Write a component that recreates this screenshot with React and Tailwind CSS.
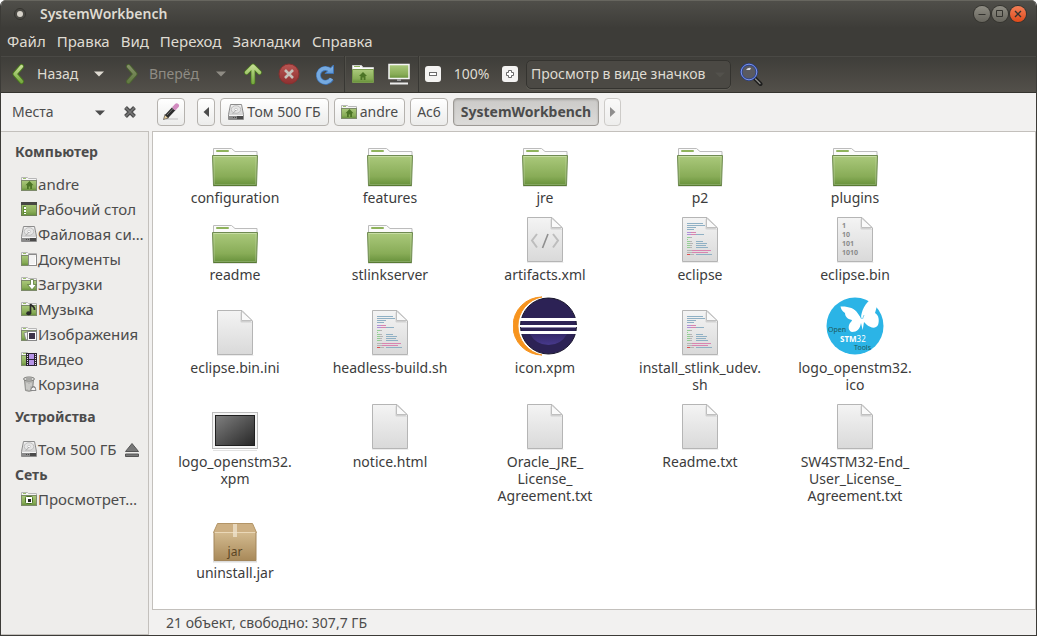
import { useState } from "react";

const menuItems = ["Файл", "Правка", "Вид", "Переход", "Закладки", "Справка"];

const places = [
  {
    title: "Компьютер",
    tall: true,
    items: [
      { name: "andre", icon: "home" },
      { name: "Рабочий стол", icon: "desktop" },
      { name: "Файловая си…", icon: "drive" },
      { name: "Документы", icon: "documents" },
      { name: "Загрузки", icon: "downloads" },
      { name: "Музыка", icon: "music" },
      { name: "Изображения", icon: "pictures" },
      { name: "Видео", icon: "video" },
      { name: "Корзина", icon: "trash" },
    ],
  },
  {
    title: "Устройства",
    tall: true,
    items: [{ name: "Том 500 ГБ", icon: "drive", eject: true }],
  },
  {
    title: "Сеть",
    tall: false,
    items: [{ name: "Просмотрет…", icon: "network" }],
  },
];

const files = [
  { name: "configuration", type: "folder" },
  { name: "features", type: "folder" },
  { name: "jre", type: "folder" },
  { name: "p2", type: "folder" },
  { name: "plugins", type: "folder" },
  { name: "readme", type: "folder" },
  { name: "stlinkserver", type: "folder" },
  { name: "artifacts.xml", type: "xml" },
  { name: "eclipse", type: "script" },
  { name: "eclipse.bin", type: "binary" },
  { name: "eclipse.bin.ini", type: "file" },
  { name: "headless-build.sh", type: "script" },
  { name: "icon.xpm", type: "eclipse" },
  { name: "install_stlink_udev.\nsh", type: "script" },
  { name: "logo_openstm32.\nico", type: "stm32" },
  { name: "logo_openstm32.\nxpm", type: "image" },
  { name: "notice.html", type: "file" },
  { name: "Oracle_JRE_\nLicense_\nAgreement.txt", type: "file" },
  { name: "Readme.txt", type: "file" },
  { name: "SW4STM32-End_\nUser_License_\nAgreement.txt", type: "file" },
  { name: "uninstall.jar", type: "jar" },
];

// Gradients shared by all icons
function IconDefs() {
  return (
    <svg className="absolute size-0" aria-hidden="true">
      <defs>
        <linearGradient id="green" x1="0" y1="0" x2="0" y2="1">
          <stop offset="0" stopColor="#abc97c" />
          <stop offset="0.7" stopColor="#88ac57" />
          <stop offset="1" stopColor="#66903a" />
        </linearGradient>
        <linearGradient id="arrow" x1="0" y1="0" x2="0" y2="1">
          <stop offset="0" stopColor="#c3dc91" />
          <stop offset="1" stopColor="#79ab42" />
        </linearGradient>
        <linearGradient id="paper" x1="0" y1="0" x2="0" y2="1">
          <stop offset="0" stopColor="#f4f4f4" />
          <stop offset="1" stopColor="#d9d9d9" />
        </linearGradient>
        <linearGradient id="metal" x1="0" y1="0" x2="0" y2="1">
          <stop offset="0" stopColor="#f2f2f2" />
          <stop offset="1" stopColor="#c4c4c4" />
        </linearGradient>
        <linearGradient id="screen" x1="0" y1="0" x2="1" y2="1">
          <stop offset="0" stopColor="#808080" />
          <stop offset="1" stopColor="#262626" />
        </linearGradient>
        <linearGradient id="box" x1="0" y1="0" x2="0" y2="1">
          <stop offset="0" stopColor="#d3ba8f" />
          <stop offset="1" stopColor="#a88959" />
        </linearGradient>
        <linearGradient id="moon" x1="0" y1="0" x2="0" y2="1">
          <stop offset="0" stopColor="#35296a" />
          <stop offset="1" stopColor="#47398c" />
        </linearGradient>
        <linearGradient id="red" x1="0" y1="0" x2="0" y2="1">
          <stop offset="0" stopColor="#b95653" />
          <stop offset="1" stopColor="#8f3030" />
        </linearGradient>
        <linearGradient id="blue" x1="0" y1="0" x2="0" y2="1">
          <stop offset="0" stopColor="#8fbdec" />
          <stop offset="1" stopColor="#5d96d4" />
        </linearGradient>
      </defs>
    </svg>
  );
}

function Caret({ className = "" }) {
  return (
    <svg viewBox="0 0 10 6" className={`h-1.5 w-2.5 ${className}`} aria-hidden="true">
      <path d="M0 0.5h10L5 5.5z" fill="currentColor" />
    </svg>
  );
}

function SmallFolder({ children }) {
  return (
    <>
      <path d="M.5 12V1.5h6l1 1h8V12z" fill="#f4f4f4" stroke="#b7b7b7" />
      <rect x="2" y="2" width="3" height="1" fill="#9cbf6c" />
      <rect x=".5" y="4.500" width="15" height="10" fill="url(#green)" stroke="#7d8a6b" />
      {children}
    </>
  );
}

function PlaceIcon({ type }) {
  return (
    <svg viewBox="0 0 16 16" className="size-4 shrink-0" aria-hidden="true">
      {type === "home" && (
        <SmallFolder>
          <path d="M8.500 5 4.500 9.200H6V13h1.800v-2.500h1.400V13H11V9.200h1.500z" fill="#4c7426" />
        </SmallFolder>
      )}
      {type === "desktop" && (
        <>
          <rect x=".5" y="1.500" width="15" height="13" fill="url(#green)" stroke="#6c7f56" />
          <rect x="0" y="1" width="16" height="3" fill="#474743" />
          <rect x="2" y="5" width="3" height="8" fill="#5f8a35" />
          <path d="M3 6h2v2H3zM3 9h2v2H3zM3 12h2v1H3z" fill="#fff" />
        </>
      )}
      {type === "drive" && (
        <>
          <path d="M2.500.5h11l2 10v5H.5v-5z" fill="url(#metal)" stroke="#8c8c8c" />
          <ellipse cx="8" cy="5.500" rx="4.800" ry="3.800" fill="#e6e6e6" stroke="#b4b4b4" strokeWidth=".8" />
          <ellipse cx="8" cy="5.500" rx="1.500" ry="1.200" fill="#fafafa" stroke="#b4b4b4" strokeWidth=".6" />
          <path d="M4.500 10 8 6" stroke="#a3a3a3" strokeWidth=".8" />
          <rect x="1" y="11" width="14" height="1" fill="#f5f5f5" />
          <rect x="1" y="12" width="14" height="3" fill="#8a8a8a" />
          <path d="M5 13h1v1H5zM7 13h1v1H7zM9 12h6v3H9z" fill="#4a4a4a" />
        </>
      )}
      {type === "documents" && (
        <SmallFolder>
          <path d="M7.500 3.500h8v11h-8z" fill="#f3f3f3" stroke="#8b8b8b" />
          <path d="M9 13.500h5.500V6" stroke="#fff" fill="none" />
        </SmallFolder>
      )}
      {type === "downloads" && (
        <SmallFolder>
          <path d="M9.500 3.500h3v5h3L11 13.800 6.500 8.500h3z" fill="#fff" stroke="#5b7a3a" strokeWidth=".8" />
        </SmallFolder>
      )}
      {type === "music" && (
        <SmallFolder>
          <path d="M9.500 12V3c.3 2 4.500 2 4 6" stroke="#2b2b2b" strokeWidth="1.700" fill="none" />
          <ellipse cx="7.700" cy="12.300" rx="2.500" ry="2" fill="#2b2b2b" />
        </SmallFolder>
      )}
      {type === "pictures" && (
        <SmallFolder>
          <path d="m3 7 6-2 2 7-6 2z" fill="#eee" stroke="#777" strokeWidth=".7" />
          <rect x="6.500" y="5.500" width="9" height="9" fill="#fff" stroke="#888" />
          <rect x="8" y="7" width="6" height="6" fill="#3d3347" />
        </SmallFolder>
      )}
      {type === "video" && (
        <SmallFolder>
          <rect x="5" y="2" width="11" height="13" fill="#2c2433" />
          <path d="M8 3h5v5H8zM8 9h5v5H8z" fill="#b694e8" />
          <path d="M6.500 3v11M14.500 3v11" stroke="#e5e0ea" strokeDasharray="1 1" />
        </SmallFolder>
      )}
      {type === "trash" && (
        <>
          <path d="M3.500 4h9l-1 10.500q-3.500 1.500-7 0z" fill="#b9b9b6" stroke="#8e8e8b" />
          <ellipse cx="8" cy="3" rx="5.500" ry="2" fill="#dadad7" stroke="#7d7d7a" />
          <path d="M5 3h6" stroke="#747472" />
          <path d="M6 7v6M8 8v6M10 7v3" stroke="#d9d9d6" />
          <path d="m9.500 14.500 1.500-3.500h3l1 3.500zM11 12l1.500-2 1.500 2" fill="#f4f4f4" stroke="#808080" strokeWidth=".9" />
        </>
      )}
      {type === "network" && (
        <SmallFolder>
          <rect x="4.500" y="5.500" width="7" height="7" rx="1" fill="#fff" stroke="#4c7426" />
          <rect x="7" y="8" width="3" height="3" fill="#222" />
        </SmallFolder>
      )}
    </svg>
  );
}

function Sheet({ children }) {
  return (
    <>
      <path d="M6 45.500h36.500" stroke="#ececec" />
      <path d="M6.500.5H31L41.500 11v33.500h-35z" fill="url(#paper)" stroke="#b5b5b5" />
      <path d="M29.500 2v9.500q0 1 1 1H41z" fill="#000" opacity=".12" />
      <path d="M30.500 1v9q0 .5.500.5h10z" fill="#fafafa" stroke="#b5b5b5" strokeWidth=".8" />
      {children}
    </>
  );
}

// [x, y, width, colour] for each piece of code on a script sheet
const codeLines = [
  [11, 6, 16, "#8fb0c4"],
  [11, 8, 18, "#8fb0c4"],
  [11, 10, 9, "#8fb0c4"],
  [11, 12, 7, "#8fb0c4"],
  [11, 15, 4, "#b08fd8"],
  [15, 15, 5, "#d884b0"],
  [11, 17, 4, "#b08fd8"],
  [15, 17, 5, "#d884b0"],
  [20, 17, 8, "#8fb0c4"],
  [11, 20, 3, "#93cf93"],
  [14, 20, 2, "#b5b5b5"],
  [11, 22, 1, "#93cf93"],
  [11, 24, 3, "#93cf93"],
  [14, 24, 2, "#b5b5b5"],
  [20, 24, 7, "#8fb0c4"],
  [11, 26, 3, "#93cf93"],
  [14, 26, 3, "#b5b5b5"],
  [20, 26, 11, "#8fb0c4"],
  [11, 28, 3, "#93cf93"],
  [14, 28, 2, "#b5b5b5"],
  [20, 28, 10, "#8fb0c4"],
  [11, 30, 3, "#93cf93"],
  [14, 30, 2, "#b5b5b5"],
  [20, 30, 12, "#8fb0c4"],
  [11, 33, 5, "#b5b5b5"],
  [16, 33, 19, "#d884b0"],
  [11, 35, 5, "#b5b5b5"],
  [16, 35, 16, "#d884b0"],
  [11, 37, 3, "#dc5050"],
  [14, 37, 4, "#b5b5b5"],
  [20, 37, 16, "#8fb0c4"],
];

function FileIcon({ type }) {
  if (type === "eclipse") {
    return (
      <svg viewBox="0 0 64 64" className="size-16" aria-hidden="true">
        <path d="M29 3A29 29 0 0 0 29 61A29.500 29.500 0 0 1 29 3z" fill="#f7941e" stroke="#f7941e" />
        <circle cx="35.500" cy="32" r="29" fill="#fff" />
        <circle cx="35.500" cy="32" r="28" fill="#2c2255" stroke="#17142b" />
        <path d="M17 40h37Q48 51 35.500 51T17 40z" fill="url(#moon)" />
        <path d="M7 24h57v3H7zM7 31h57v2H7zM7 37h57v3H7z" fill="#fff" />
        <path d="M8 33.500h55" stroke="#8f88ad" />
      </svg>
    );
  }
  if (type === "stm32") {
    return (
      <svg viewBox="0 0 64 64" className="size-16" aria-hidden="true">
        <circle cx="32" cy="32" r="28.500" fill="#2bb4e6" />
        <path
          d="M17.500 12.500C24 12 32 14 34.500 19L38 24C38 18 42 8 50 4 55 3 56 7 54 12L52 19C56 21 56.500 27 55 31 52 36 47 33 44 31L41 28 39.700 36 38 29C37 35 34 38 29 38 25 37 25 32 27 29 29 27 29 26 29 26 24 25 22 22 22 19 19 17 18 15 17.500 12.500z"
          fill="#fff"
        />
        <path d="M38.500 25 37 21M39.500 25 41 21" stroke="#2bb4e6" strokeWidth=".6" />
        <text x="5" y="38" fontSize="7" fill="#1f5a5c" className="font-['Noto_Sans']">Open</text>
        <text x="17" y="48" fontSize="8" fill="#fff" className="font-['Noto_Sans']">
          <tspan fontWeight="700">STM</tspan>32
        </text>
        <text x="31" y="56" fontSize="7" fill="#1f5a5c" className="font-['Noto_Sans']">Tools</text>
      </svg>
    );
  }
  return (
    <svg viewBox="0 0 48 48" className="size-12" aria-hidden="true">
      {type === "folder" && (
        <>
          <path d="M2 46.500h44" stroke="#e3e3e3" />
          <path d="M2.500 16V8.500h18l3.500 3h22V16z" fill="#fbfbfb" stroke="#bcbcbc" />
          <rect x="5" y="10" width="13" height="2" rx="1" fill="#8fb35c" />
          <path d="M1.500 15.500h45l-1 30h-43z" fill="url(#green)" stroke="#6f8a52" />
          <path d="M2.500 16.500h43" stroke="#c6dca3" />
          <path d="m3 17 .5 27.500h41L45 17" fill="none" stroke="#fff" opacity=".18" />
          <path d="M2.500 45.500h43" stroke="#587a33" />
        </>
      )}
      {type === "file" && <Sheet />}
      {type === "xml" && (
        <Sheet>
          <path d="m16 17-5 6.500 5 7M32 17l5 6.500-5 7" fill="none" stroke="#bdbdbd" strokeWidth="2" />
          <path d="M27 17l-5.500 14" stroke="#8f8f8f" strokeWidth="1.600" />
        </Sheet>
      )}
      {type === "script" && (
        <Sheet>
          {codeLines.map(([x, y, width, color]) => (
            <rect key={`${x}-${y}`} x={x} y={y} width={width} height="1" fill={color} />
          ))}
        </Sheet>
      )}
      {type === "binary" && (
        <Sheet>
          <g fontSize="7" fontWeight="700" fill="#8a8a8a" className="font-['Noto_Sans']">
            <text x="11" y="11">1</text>
            <text x="11" y="20">10</text>
            <text x="11" y="29">101</text>
            <text x="11" y="38">1010</text>
          </g>
        </Sheet>
      )}
      {type === "image" && (
        <>
          <path d="M2 46.500h44" stroke="#e3e3e3" />
          <rect x="1.500" y="8.500" width="45" height="36" fill="#f4f4f4" stroke="#bdbdbd" />
          <rect x="4.500" y="11.500" width="39" height="30" fill="url(#screen)" stroke="#1f1f1f" />
        </>
      )}
      {type === "jar" && (
        <>
          <path d="M2 46.500h44" stroke="#dcdcdc" strokeWidth="2" />
          <path d="M6.500 8.500h35l4 9h-43z" fill="#cdb084" stroke="#b39567" />
          <path d="M3 17.500h42v28H3z" fill="url(#box)" stroke="#a2855a" />
          <path d="M3.500 17.500h41" stroke="#ead8b8" />
          <path d="M22 9h4v13h-4z" fill="#efe4cf" opacity=".75" />
          <text x="24" y="41" textAnchor="middle" fontSize="12" fill="#5b4624" className="font-['Noto_Sans']">jar</text>
        </>
      )}
    </svg>
  );
}

function ToolButton({ label, disabled, className = "w-9", children }) {
  return (
    <button
      type="button"
      aria-label={label}
      disabled={disabled}
      className={`flex h-full shrink-0 items-center justify-center ${className}`}
    >
      {children}
    </button>
  );
}

function Separator() {
  return <div className="ml-px h-full w-px shrink-0 bg-[#383733] shadow-[1px_0_0_#504f49]" />;
}

function TitleBar() {
  return (
    <header className="flex h-7 items-center bg-gradient-to-b from-[#504f4a] to-[#3d3c38] pr-2.5 pl-[11px] shadow-[inset_0_1px_0_#67665f]">
      <svg viewBox="0 0 16 16" className="mr-3 size-4" aria-hidden="true">
        <circle cx="8" cy="8" r="5.500" fill="#4b4a45" stroke="#33322e" />
        <circle cx="8" cy="8" r="3" fill="#d6d2c9" />
      </svg>
      <h1 className="flex-1 text-sm font-semibold text-[#dfdbd2]">SystemWorkbench</h1>
      <div className="flex gap-0.5">
        <button type="button" aria-label="Свернуть" className="size-4 rounded-full bg-gradient-to-b from-[#8f8d84] to-[#67655d] text-[#33322e] ring-1 ring-[#35342f]">
          <svg viewBox="0 0 16 16"><path d="M4.500 8.500h7" stroke="currentColor" /></svg>
        </button>
        <button type="button" aria-label="Развернуть" className="size-4 rounded-full bg-gradient-to-b from-[#8f8d84] to-[#67655d] text-[#33322e] ring-1 ring-[#35342f]">
          <svg viewBox="0 0 16 16"><path d="M4.500 4.500h6v6h-6z" fill="none" stroke="currentColor" /></svg>
        </button>
        <button type="button" aria-label="Закрыть" className="size-4 rounded-full bg-gradient-to-b from-[#f37f56] to-[#df4816] text-[#33322e] ring-1 ring-[#35342f]">
          <svg viewBox="0 0 16 16"><path d="m5 5 6 6m0-6-6 6" stroke="currentColor" strokeWidth="1.300" /></svg>
        </button>
      </div>
    </header>
  );
}

function Toolbar() {
  return (
    <div className="flex h-[37px] items-center border-b border-[#35342f] bg-gradient-to-b from-[#3e3d39] to-[#53504a] pl-[5px] text-[#dfdbd2] shadow-[inset_0_1px_0_#4a4945]">
      <button type="button" className="flex h-full w-[81px] items-center gap-[7px]">
        <svg viewBox="0 0 24 24" className="size-6" aria-hidden="true">
          <path d="m15.500 4.500-6.500 7.500 6.500 7.500" fill="none" stroke="#4b7a1e" strokeWidth="5" strokeLinecap="round" strokeLinejoin="round" />
          <path d="m15.500 4.500-6.500 7.500 6.500 7.500" fill="none" stroke="url(#arrow)" strokeWidth="3.300" strokeLinecap="round" strokeLinejoin="round" />
        </svg>
        Назад
      </button>
      <ToolButton label="История назад" className="w-6">
        <Caret />
      </ToolButton>
      <button type="button" disabled className="ml-[7px] flex h-full w-[91px] items-center gap-[7px] text-[#8f8c84]">
        <svg viewBox="0 0 24 24" className="size-6 opacity-50" aria-hidden="true">
          <path d="m10.500 4.500 6.500 7.500-6.500 7.500" fill="none" stroke="#4b7a1e" strokeWidth="5" strokeLinecap="round" strokeLinejoin="round" />
          <path d="m10.500 4.500 6.500 7.500-6.500 7.500" fill="none" stroke="url(#arrow)" strokeWidth="3.300" strokeLinecap="round" strokeLinejoin="round" />
        </svg>
        Вперёд
      </button>
      <ToolButton label="История вперёд" disabled className="mr-0.5 w-6 text-[#8f8c84]">
        <Caret />
      </ToolButton>
      <ToolButton label="Вверх">
        <svg viewBox="0 0 24 24" className="size-6" aria-hidden="true">
          <path d="M12 20.500V4.500M5.500 10.500l6.500-6.500 6.500 6.500" fill="none" stroke="#4b7a1e" strokeWidth="4.600" strokeLinecap="round" strokeLinejoin="round" />
          <path d="M12 20.500V4.500M5.500 10.500l6.500-6.500 6.500 6.500" fill="none" stroke="url(#arrow)" strokeWidth="3.200" strokeLinecap="round" strokeLinejoin="round" />
        </svg>
      </ToolButton>
      <ToolButton label="Остановить" disabled>
        <svg viewBox="0 0 24 24" className="size-6" aria-hidden="true">
          <circle cx="12" cy="12" r="10" fill="url(#red)" stroke="#87302f" />
          <path d="m8 8 8 8m0-8-8 8" stroke="#c5c1ba" strokeWidth="2.600" />
        </svg>
      </ToolButton>
      <ToolButton label="Обновить">
        <svg viewBox="0 0 24 24" className="size-6" aria-hidden="true">
          <path d="M17.500 8.500A7 7 0 1 0 18.500 17" fill="none" stroke="#3f74b5" strokeWidth="5" />
          <path d="M20.500 3v8.500H12z" fill="url(#blue)" stroke="#3f74b5" />
          <path d="M17.500 8.500A7 7 0 1 0 18.500 16.500" fill="none" stroke="#76aae0" strokeWidth="3.500" />
        </svg>
      </ToolButton>
      <Separator />
      <ToolButton label="Домашняя папка">
        <svg viewBox="0 0 24 24" className="size-6" aria-hidden="true">
          <path d="M1.500 8V3.500h9l1.500 2h10.500V8z" fill="#fbfbfb" stroke="#cfcfcf" />
          <rect x="3" y="4" width="6" height="1" fill="#8fb35c" />
          <path d="M1.500 7.500h21v13h-21z" fill="url(#green)" stroke="#789a4c" />
          <path d="M12 10 8 14h1.500v4h1.800v-2.500h1.400V18h1.800v-4H16z" fill="#4c7426" />
        </svg>
      </ToolButton>
      <ToolButton label="Компьютер">
        <svg viewBox="0 0 24 24" className="size-6" aria-hidden="true">
          <rect x="2" y="2.500" width="20" height="14" fill="url(#green)" stroke="#f5f5f5" strokeWidth="1.500" />
          <path d="M10 17h4v3h-4z" fill="#9a9a9a" />
          <path d="M3 20.500h18v2H3z" fill="#ededed" />
          <path d="M7 19.500h10" stroke="#474747" />
        </svg>
      </ToolButton>
      <Separator />
      <ToolButton label="Уменьшить" className="w-7">
        <svg viewBox="0 0 16 16" className="size-4" aria-hidden="true">
          <rect width="16" height="16" rx="3" fill="#f4f3f2" />
          <rect x="4.500" y="6.500" width="7" height="3" fill="#fff" stroke="#6b6b6b" />
        </svg>
      </ToolButton>
      <span className="w-[49px] shrink-0 text-center">100%</span>
      <ToolButton label="Увеличить" className="w-7">
        <svg viewBox="0 0 16 16" className="size-4" aria-hidden="true">
          <rect width="16" height="16" rx="3" fill="#f4f3f2" />
          <path d="M6.500 4.500h3v2h2v3h-2v2h-3v-2h-2v-3h2z" fill="#fff" stroke="#6b6b6b" />
        </svg>
      </ToolButton>
      <div className="relative ml-0.5 w-[205px] shrink-0">
        <select
          aria-label="Режим просмотра"
          className="h-[29px] w-full appearance-none rounded-[5px] border border-[#34332f] bg-[#4b4944] pr-4 pl-1 shadow-[0_1px_0_#605e57]"
        >
          <option>Просмотр в виде значков</option>
        </select>
        <Caret className="pointer-events-none absolute top-3 right-1.5 text-[#53514c]" />
      </div>
      <ToolButton label="Поиск" className="ml-0.5 w-9">
        <svg viewBox="0 0 24 24" className="size-6" aria-hidden="true">
          <path d="m15.500 16 6 6" stroke="#1d1d1d" strokeWidth="4" strokeLinecap="round" />
          <path d="m16.500 17 4.500 4.500" stroke="#8d8d88" strokeWidth="1.300" strokeLinecap="round" />
          <circle cx="10" cy="10" r="7.800" fill="#5a5a60" stroke="#27408f" strokeWidth="2.400" />
          <circle cx="10" cy="10" r="7.800" fill="none" stroke="#7f95e8" strokeWidth="1" />
          <path d="M7 8q2-3 5-2l-1 2z" fill="#d9d9e2" />
        </svg>
      </ToolButton>
    </div>
  );
}

function PathButton({ active, label, className = "px-[5px]", children }) {
  return (
    <button
      type="button"
      aria-label={label}
      aria-pressed={active}
      className={`flex h-7 shrink-0 items-center justify-center gap-[3px] rounded border ${
        active
          ? "border-[#9c9995] bg-gradient-to-b from-[#cbcac8] to-[#dcdbd9] font-bold shadow-[inset_0_1px_2px_#a5a39f]"
          : "border-[#b5b2ae] bg-gradient-to-b from-white to-[#ececeb]"
      } ${className}`}
    >
      {children}
    </button>
  );
}

function LocationBar() {
  return (
    <div className="flex h-[38px] items-center">
      <div className="flex w-[155px] shrink-0 items-center pr-[17px]">
        <div className="relative flex-1">
          <select aria-label="Боковая панель" className="w-full appearance-none bg-transparent pl-[11px]">
            <option>Места</option>
          </select>
          <Caret className="pointer-events-none absolute top-2 right-4" />
        </div>
        <button type="button" aria-label="Закрыть боковую панель" className="shrink-0">
          <svg viewBox="0 0 18 18" className="size-[18px]" aria-hidden="true">
            <path d="m4.500 4.500 9 9m0-9-9 9" stroke="#4c4c4c" strokeWidth="4" />
            <path d="m4.500 4.500 9 9m0-9-9 9" stroke="#777" strokeWidth="1.500" />
          </svg>
        </button>
      </div>
      <PathButton label="Изменить адрес" className="mr-3 ml-px w-7">
        <svg viewBox="0 0 18 18" className="size-[18px] shrink-0" aria-hidden="true">
          <path d="M4 16h12" stroke="#d8d8d8" strokeWidth="2" />
          <path d="m1.500 16.500 1.500-5 3.500 3.500z" fill="#e8cf9e" stroke="#333" strokeWidth=".6" />
          <path d="M4.500 13.500 12 5.500" stroke="#2d2d2d" strokeWidth="4.500" />
          <path d="m5 12 7-7.500" stroke="#777" />
          <path d="m11.500 6 1.500-1.600" stroke="#c9c9c9" strokeWidth="4.600" />
          <path d="m13 4.500 1.700-1.800" stroke="#d28bc0" strokeWidth="4.600" strokeLinecap="round" />
        </svg>
      </PathButton>
      <nav className="flex gap-[5px]">
        <PathButton label="Предыдущие папки" className="w-[18px]">
          <svg viewBox="0 0 6 10" className="h-2.5 w-1.5 shrink-0" aria-hidden="true"><path d="M6 0v10L.5 5z" fill="#4c4c4c" /></svg>
        </PathButton>
        <PathButton className="w-[109px]">
          <PlaceIcon type="drive" />
          Том 500 ГБ
        </PathButton>
        <PathButton className="w-[71px]">
          <PlaceIcon type="home" />
          andre
        </PathButton>
        <PathButton className="w-[38px]">Ac6</PathButton>
        <PathButton active className="w-[146px]">SystemWorkbench</PathButton>
        <PathButton label="Следующие папки" className="w-[17px] opacity-60">
          <svg viewBox="0 0 6 10" className="h-2.5 w-1.5 shrink-0" aria-hidden="true"><path d="M0 0v10l5.500-5z" fill="#4c4c4c" /></svg>
        </PathButton>
      </nav>
    </div>
  );
}

function Sidebar() {
  return (
    <aside className="w-[148px] shrink-0 border border-l-0 border-[#c3c0bc] bg-[#eeedeb]">
      {places.map((group) => (
        <section key={group.title}>
          <h2 className={`flex items-center pl-3.5 font-bold ${group.tall ? "h-10" : "h-[25px]"}`}>
            {group.title}
          </h2>
          <ul className="text-[15px]">
            {group.items.map((item) => (
              <li key={item.name} className="flex h-[25px] items-center pl-5">
                <a href="#" className="flex items-center gap-px whitespace-nowrap">
                  <PlaceIcon type={item.icon} />
                  {item.name}
                </a>
                {item.eject && (
                  <button type="button" aria-label="Извлечь" className="mr-2 ml-auto">
                    <svg viewBox="0 0 16 16" className="size-4" aria-hidden="true">
                      <path d="M8 1.500 14.500 9.500h-13z" fill="#777" stroke="#555" />
                      <path d="M1.500 12h13v2.500h-13z" fill="#777" stroke="#555" />
                    </svg>
                  </button>
                )}
              </li>
            ))}
          </ul>
        </section>
      ))}
    </aside>
  );
}

export default function App() {
  const [selected, setSelected] = useState(null);

  return (
    <div className="flex min-h-screen flex-col overflow-hidden rounded-t-md border border-t-0 border-[#3c3b37] bg-[#f2f1f0] font-['Noto_Sans',sans-serif] text-sm text-[#4c4c4c]">
      <IconDefs />
      <TitleBar />

      {/* Menu */}
      <nav className="flex h-7 items-center gap-[11px] bg-[#3d3c38] pl-1.5 text-[15px] text-[#dfdbd2]">
        {menuItems.map((item) => (
          <button key={item} type="button">
            {item}
          </button>
        ))}
      </nav>

      <Toolbar />
      <LocationBar />

      <div className="flex flex-1">
        <Sidebar />
        <div className="ml-[3px] flex flex-1 flex-col">
          {/* Files: each one spans an icon row and a label row */}
          <main className="grid flex-1 grid-cols-[repeat(auto-fill,154px)] content-start gap-x-px border border-[#c3c0bc] bg-white pt-2 pl-[5px]">
            {files.map((file) => (
              <button
                key={file.name}
                type="button"
                onClick={() => setSelected(file.name)}
                className="row-span-2 grid grid-rows-subgrid justify-items-center pb-[11px]"
              >
                <span className="self-end">
                  <FileIcon type={file.type} />
                </span>
                <span
                  className={`mt-px self-start rounded-sm leading-[17px] whitespace-pre-line ${
                    selected === file.name ? "bg-[#86b953] text-white" : "text-[#3c3c3c]"
                  }`}
                >
                  {file.name}
                </span>
              </button>
            ))}
          </main>

          {/* Status bar */}
          <footer className="flex h-[25px] items-center pl-3.5">
            21 объект, свободно: 307,7 ГБ
          </footer>
        </div>
      </div>
    </div>
  );
}
